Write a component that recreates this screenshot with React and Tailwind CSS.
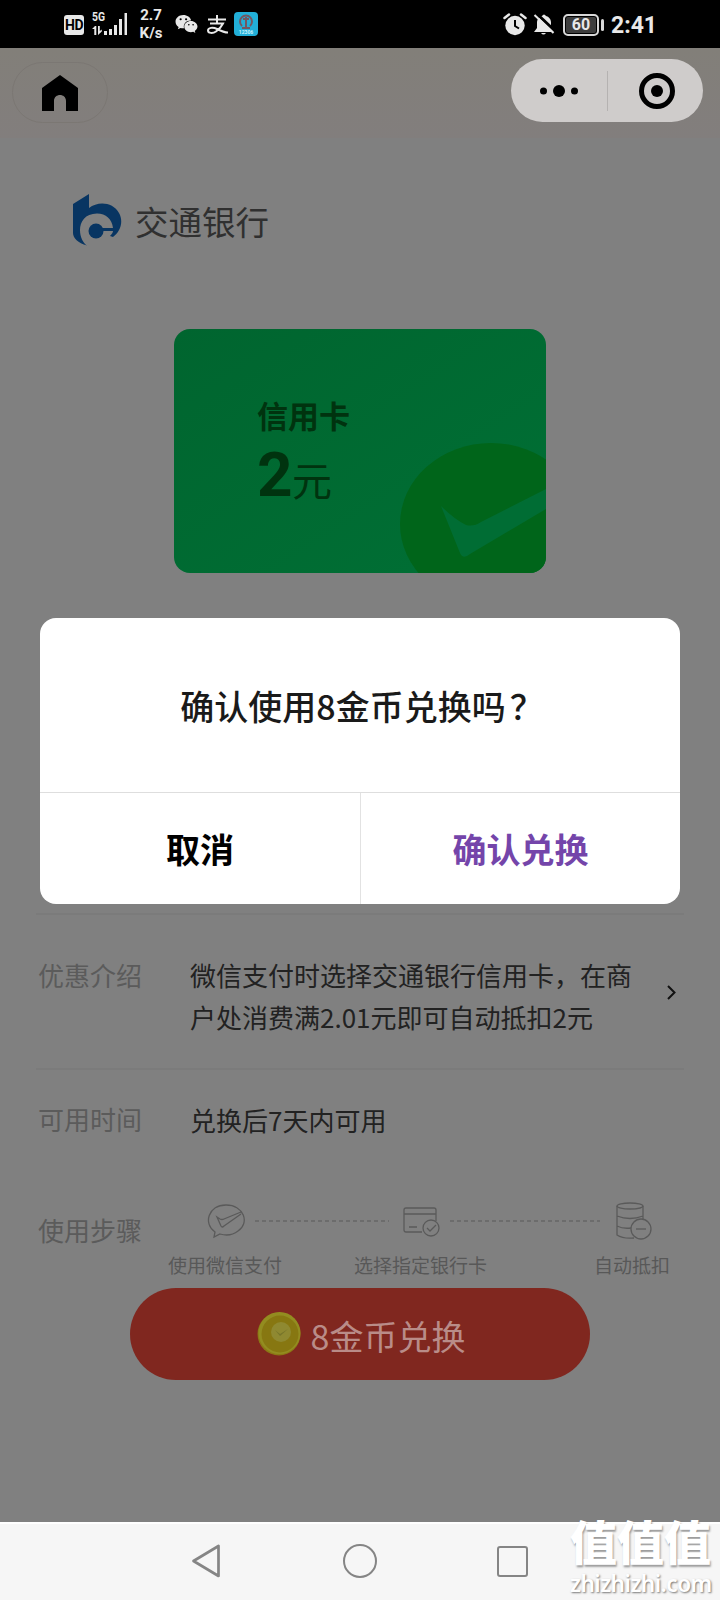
import React from 'react';
import { FaWeixin } from 'react-icons/fa';

const StatusBar = () => {
  return (
    <div className="flex h-12 w-full items-center bg-black pl-16 text-[#e8e8e8] font-['Roboto','Noto_Sans_CJK_SC',sans-serif]">
      <div className="mt-0.5 flex h-5 w-5 items-center justify-center rounded-[3px] bg-[#e8e8e8] text-[14px] font-bold tracking-[-0.5px] text-black">
        HD
      </div>
      <div className="relative ml-2 h-6 w-9">
        <span className="absolute -top-px left-0 origin-left scale-x-[0.86] text-[12px] font-bold leading-[12px]">5G</span>
        <svg className="h-6 w-9" viewBox="0 0 36 24" fill="#e8e8e8">
          <path d="M0 17l3-3h1.300v9H2.300v-6zM6 14h1.800v5l2-1.500v2l-3.800 3.500zM12 19h3v4h-3zM17 17h3v6h-3zM22 13h3v10h-3zM27 7h3v16h-3zM32.500 1h2.500v22h-2.500z" />
        </svg>
      </div>
      <div className="ml-[11px] w-6 text-center text-[15px] font-bold leading-[18px]">
        <div>2.7</div>
        <div>K/s</div>
      </div>
      <FaWeixin className="ml-3 h-[22px] w-[23px]" />
      <svg className="ml-2 h-[19px] w-[23px]" viewBox="0 0 23 19" fill="none" stroke="#e8e8e8" strokeWidth="2">
        <path d="M2 4.500h18M11 0v8.500M4 8.500h13c-1.500 3-4 6-7 8-3 2-8 2-8-1s5-3.500 9-1.500 7 3.500 11 3.500" />
      </svg>
      <div className="ml-[5px] flex h-6 w-6 flex-col items-center rounded bg-[#22afd8]">
        <svg className="mt-0.5 h-4 w-4" viewBox="0 0 16 16" fill="none" stroke="#735762" strokeWidth="2">
          <path d="M4 12A6 6 0 1 1 12 12M8 3v10M5 5h6M4 14h8" />
        </svg>
        <span className="text-[5px] font-bold leading-[5px] text-[#c8f4ff]">12306</span>
      </div>
      <svg className="ml-[245px] h-[23px] w-6" viewBox="0 0 24 23">
        <circle cx="12" cy="12.500" r="9.700" fill="#e8e8e8" />
        <path d="M1.500 5L6 1.500M18 1.500L22.500 5" stroke="#e8e8e8" strokeWidth="2.500" strokeLinecap="round" />
        <path d="M12 7v6l4 2.500" fill="none" stroke="#000" strokeWidth="2" />
      </svg>
      <svg className="ml-1.5 h-[23px] w-[22px]" viewBox="0 0 22 23">
        <path d="M4 9a7 7 0 0 1 5-6q2-3 4 0a7 7 0 0 1 5 6v6l3 4H1l3-4zM8 20h5q-2.500 3-5 0z" fill="#e8e8e8" />
        <path d="M3 0l19 18" stroke="#000" strokeWidth="3" />
        <path d="M1.500 2l19 18" stroke="#e8e8e8" strokeWidth="2" />
      </svg>
      <div className="ml-2 mt-0.5 flex h-[22px] w-9 items-center justify-center rounded-[5px] border-2 border-[#d8d8d8] bg-[#3d3d3d] text-[16px] font-bold shadow-[inset_0_0_0_1px_#000]">
        60
      </div>
      <div className="ml-0.5 mt-0.5 h-3 w-[3px] rounded bg-[#d8d8d8]" />
      <span className="ml-[7px] mt-1 text-[23px] font-bold leading-6">2:41</span>
    </div>
  );
};

const PageHeader = () => {
  return (
    <div className="flex h-[90px] items-start justify-between bg-linear-to-b from-[#827f79] to-[#827e7d] pl-3 pr-[17px]">
      <div className="mt-[14px] flex h-[61px] w-24 items-center justify-center rounded-full border border-[#7b7773]">
        <svg className="h-9 w-9" viewBox="0 0 36 36">
          <path d="M0 13L18 0l18 13v23H24V26c0-8-12-8-12 0v10H0z" fill="#000" />
        </svg>
      </div>
      <div className="mt-[11px] flex h-[63px] w-48 items-center rounded-full bg-[#cfcccb]">
        <svg className="ml-7 h-3 w-10" viewBox="0 0 40 12">
          <circle cx="4.500" cy="6" r="3.500" />
          <circle cx="20" cy="6" r="6" />
          <circle cx="35.500" cy="6" r="3.500" />
        </svg>
        <div className="ml-7 h-10 w-px bg-[#b5b2b1]" />
        <svg className="ml-[31px] h-9 w-9" viewBox="0 0 36 36">
          <circle cx="18" cy="18" r="15.500" fill="none" stroke="#000" strokeWidth="5" />
          <circle cx="18" cy="18" r="6" />
        </svg>
      </div>
    </div>
  );
};

const BankLogo = () => {
  return (
    <svg className="h-[53px] w-[50px]" viewBox="0 0 50 53" fill="#083562">
      <path d="M0 11L16 1v14C25 8 40 9 46 20c5 9 1 19-6 24l-3-1c2-2 3-4 3-5H28v-3h12C39 26 33 20.500 24 20.500 12 20.500 7 29 7 37c0 7 3 13 7 15.500C5 50 0 45 0 40z" />
      <circle cx="23" cy="38" r="7.500" />
    </svg>
  );
};

const CouponCard = () => {
  return (
    <div className="relative mx-auto mt-[84px] h-[244px] w-[372px] shrink-0 overflow-hidden rounded-2xl bg-linear-to-br from-[#00652f] to-[#007035]">
      <svg className="absolute inset-0 h-full w-full" viewBox="0 0 372 244">
        <ellipse cx="317" cy="195" rx="91" ry="81" fill="#00651a" />
        <path d="M267 177q13 13 25 19 8 2 15-3l65-33v20l-76 45q-7 6-10-1z" fill="#006d34" />
      </svg>
      <div className="relative pl-[83px] pt-[67px] text-[#00330f] font-['Roboto','Noto_Sans_CJK_SC',sans-serif]">
        <div className="text-[31px] font-bold leading-[44px]">信用卡</div>
        <div className="flex items-baseline pt-px">
          <span className="w-[35px] text-[62px] font-bold leading-[67px] -tracking-[1px]">2</span>
          <span className="text-[40px] leading-[44px]">元</span>
        </div>
      </div>
    </div>
  );
};

const PayIcon = () => (
  <svg className="h-9 w-[38px]" viewBox="0 0 38 36" fill="none" stroke="#5a5a5a" strokeWidth="1.300">
    <path d="M8 29C-4 21 1 2 19 2s24 18 12 26c-5 4-11 5-18 3l-6 3z" />
    <path d="M34 9L17 16q-2 1-4 0l-3-2 4 9q1 2 3 0l17-12" />
  </svg>
);

const CardIcon = () => (
  <svg className="ml-[13px] h-9 w-[38px]" viewBox="0 0 38 36" fill="none" stroke="#5a5a5a" strokeWidth="1.300">
    <path d="M20 29H4q-2 0-2-2V7q0-2 2-2h28q2 0 2 2v11M2 11h32M7 24h8" />
    <circle cx="29" cy="25" r="8" />
    <path d="M25 25l3 3 6-6" />
  </svg>
);

const CoinsIcon = () => (
  <svg className="ml-[15px] h-[38px] w-[38px]" viewBox="0 0 38 38" fill="none" stroke="#5a5a5a" strokeWidth="1.300">
    <ellipse cx="15" cy="4" rx="13" ry="3" />
    <path d="M2 4v29q6 4 17 3M28 4v13M2 14q13 5 26 0M2 24q6 3 14 2" />
    <circle cx="26" cy="27" r="10" />
    <path d="M21 27h10" />
  </svg>
);

const Coin = () => (
  <svg className="h-11 w-11" viewBox="0 0 44 44">
    <circle cx="22" cy="22" r="21.500" fill="#8b7815" />
    <circle cx="22.500" cy="21" r="21" fill="#938c20" />
    <circle cx="23" cy="22" r="18.500" fill="#877711" />
    <circle cx="24" cy="20" r="10" fill="#8f8931" />
    <path d="M18 18l5 4 8-5-8 7z" fill="#77752a" />
  </svg>
);

const DashLine = ({ className }) => (
  <svg className={className} preserveAspectRatio="none">
    <line x1="0" y1="1" x2="100%" y2="1" stroke="#656565" strokeWidth="1.300" strokeDasharray="4 3" />
  </svg>
);

const ConfirmDialog = () => {
  return (
    <div className="absolute left-10 top-[618px] flex h-[286px] w-[640px] flex-col rounded-2xl bg-white">
      <div className="flex h-[175px] items-center justify-center border-b border-[#dedede] text-[34px] font-medium text-[#1a1a1a]">
        <span>确认使用8金币兑换吗</span>
        <span className="w-[34px] pl-1">？</span>
      </div>
      <div className="grid flex-1 grid-cols-[321px_319px] text-[34px] font-bold">
        <button className="border-r border-[#e2e2e2] text-black">取消</button>
        <button className="text-[#7445aa]">确认兑换</button>
      </div>
    </div>
  );
};

const NavBar = () => {
  return (
    <div className="flex h-[78px] items-center border-t-2 border-white bg-[#f6f6f6] pb-[2px] pl-[191px]">
      <svg className="h-9 w-[30px]" viewBox="0 0 30 36">
        <path d="M27.500 3v30L2.500 18z" fill="none" stroke="#858585" strokeWidth="2.700" strokeLinejoin="round" />
      </svg>
      <div className="ml-[122px] h-[34px] w-[34px] rounded-full border-[2.700px] border-[#858585]" />
      <div className="ml-[120px] h-[31px] w-[31px] rounded-[3px] border-[2.700px] border-[#858585]" />
    </div>
  );
};

const Watermark = () => {
  return (
    <div className="absolute left-[570px] top-[1516px] w-[150px] text-white font-['Roboto','Noto_Sans_CJK_SC',sans-serif]">
      <div className="text-[47px] font-black leading-[56px] [text-shadow:1px_2px_2px_#999]">值值值</div>
      <div className="origin-left scale-x-[0.98] whitespace-nowrap pt-px text-[23px] font-semibold leading-[20px] font-['Noto_Sans',sans-serif] tracking-[-0.5px] [text-shadow:1px_1px_2px_#777]">
        zhizhizhi.com
      </div>
    </div>
  );
};

export default function App() {
  return (
    <div className="relative flex h-[1600px] w-[720px] flex-col overflow-hidden bg-[#808080] font-['Noto_Sans_CJK_SC',sans-serif]">
      <StatusBar />
      <PageHeader />
      <div className="flex h-[1384px] flex-col">
        <div className="mt-[55px] flex h-[52px] items-center pl-[73px]">
          <BankLogo />
          <span className="ml-3 pt-1 text-[33.500px] leading-[48px] text-[#303030]">交通银行</span>
        </div>
        <CouponCard />
        <div className="mx-9 mt-[340px] border-t-2 border-[#7b7b7b]" />
        <div className="mx-9 flex h-[153px] pt-[39px] text-[26px] leading-[42px]">
          <div className="w-[154px] pl-0.5 text-[#5b5b5b]">优惠介绍</div>
          <div className="w-[446px] text-[#222]">
            <div>微信支付时选择交通银行信用卡，在商</div>
            <div>户处消费满2.01元即可自动抵扣2元</div>
          </div>
          <svg className="ml-[30px] mt-[30px] h-4 w-3" viewBox="0 0 12 16">
            <path d="M2 2l6.500 6.500L2 15" fill="none" stroke="#111" strokeWidth="2" />
          </svg>
        </div>
        <div className="mx-9 border-t-2 border-[#7b7b7b]" />
        <div className="mx-9 flex h-[108px] pt-[28px] text-[26px] leading-[42px]">
          <div className="w-[154px] pl-0.5 text-[#5b5b5b]">可用时间</div>
          <div className="pt-px text-[#222]">兑换后7天内可用</div>
        </div>
        <div className="flex h-[110px] pl-[38px]">
          <div className="pt-[31px] text-[26px] leading-[42px] text-[#5b5b5b]">使用步骤</div>
          <div className="ml-[26px] mt-[24px] text-[19px] text-[#585858]">
            <div className="flex h-[38px] items-center pl-[39px]">
              <PayIcon />
              <DashLine className="ml-2.5 h-0.5 w-[134px]" />
              <CardIcon />
              <DashLine className="ml-2.5 h-0.5 w-[150px]" />
              <CoinsIcon />
            </div>
            <div className="mt-[11px] flex leading-7">
              <span className="w-[186px]">使用微信支付</span>
              <span className="w-[240px]">选择指定银行卡</span>
              <span className="w-[80px]">自动抵扣</span>
            </div>
          </div>
        </div>
        <button className="mx-auto flex h-[92px] w-[460px] shrink-0 items-center justify-center rounded-full bg-[#80271f] pl-0.5 text-[34px] text-[#b98c88]">
          <Coin />
          <span className="ml-2.5 pt-0.5">8金币兑换</span>
        </button>
      </div>
      <NavBar />
      <ConfirmDialog />
      <Watermark />
    </div>
  );
}
